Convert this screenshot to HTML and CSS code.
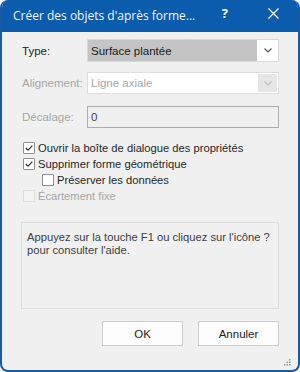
FILE: index.html
```html
<!DOCTYPE html>
<html lang="fr">
<head>
<meta charset="utf-8">
<link rel="stylesheet" href="styles.css">
</head>
<body>
<div class="window">
  <div class="titlebar">
    <span class="title">Créer des objets d'après forme...</span>
    <span class="help">?</span>
    <svg class="close" width="11" height="11" viewBox="0 0 11 11"><path d="M0.5 0.5 L10.5 10.5 M10.5 0.5 L0.5 10.5" stroke="#fff" stroke-width="1.2" fill="none"/></svg>
  </div>
  <div class="content">
    <div class="row">
      <span class="label">Type:</span>
      <div class="combo">
        <span class="combo-value selected">Surface plantée</span>
        <span class="combo-arrow"><svg width="8" height="5" viewBox="0 0 8 5"><path d="M0.5 0.5 L4 4 L7.5 0.5" stroke="#555" stroke-width="1.1" fill="none"/></svg></span>
      </div>
    </div>
    <div class="row row-2">
      <span class="label disabled">Alignement:</span>
      <div class="combo combo-disabled">
        <span class="combo-value">Ligne axiale</span>
        <span class="combo-arrow"><svg width="8" height="5" viewBox="0 0 8 5"><path d="M0.5 0.5 L4 4 L7.5 0.5" stroke="#bbb" stroke-width="1.1" fill="none"/></svg></span>
      </div>
    </div>
    <div class="row row-3">
      <span class="label disabled">Décalage:</span>
      <div class="textbox">0</div>
    </div>
    <div class="checks">
      <div class="check"><span class="box"><svg width="10" height="10" viewBox="0 0 10 10"><path d="M1.8 5 L4 7.2 L8.4 2.6" stroke="#333" stroke-width="1.2" fill="none"/></svg></span>Ouvrir la boîte de dialogue des propriétés</div>
      <div class="check"><span class="box"><svg width="10" height="10" viewBox="0 0 10 10"><path d="M1.8 5 L4 7.2 L8.4 2.6" stroke="#333" stroke-width="1.2" fill="none"/></svg></span>Supprimer forme géométrique</div>
      <div class="check indent"><span class="box"></span>Préserver les données</div>
      <div class="check disabled"><span class="box box-disabled"></span>Écartement fixe</div>
    </div>
    <div class="helpbox">Appuyez sur la touche F1 ou cliquez sur l'icône ?<br>pour consulter l'aide.</div>
    <div class="buttons">
      <button class="btn">OK</button>
      <button class="btn">Annuler</button>
    </div>
    <div class="grip">
      <svg width="7" height="7" viewBox="0 0 7 7" fill="#999"><rect x="5" y="0" width="1.5" height="1.5"/><rect x="2.5" y="2.5" width="1.5" height="1.5"/><rect x="5" y="2.5" width="1.5" height="1.5"/><rect x="0" y="5" width="1.5" height="1.5"/><rect x="2.5" y="5" width="1.5" height="1.5"/><rect x="5" y="5" width="1.5" height="1.5"/></svg>
    </div>
  </div>
</div>
</body>
</html>
```
FILE: styles.css
```css
html, body {
  margin: 0;
  padding: 0;
  background: #ffffff;
}
body {
  font-family: "Liberation Sans", Arial, sans-serif;
  font-size: 11.5px;
  color: #222;
}
.window {
  width: 300px;
  height: 372px;
  box-sizing: border-box;
  border: 2px solid #1a5aa4;
  border-top: none;
  border-radius: 8px;
  overflow: hidden;
  background: #f0f0f0;
  display: flex;
  flex-direction: column;
}
.titlebar {
  height: 32px;
  flex: none;
  background: #0b5cad;
  color: #f2f6fb;
  display: flex;
  align-items: center;
  padding-left: 11px;
  box-sizing: border-box;
}
.title {
  font-family: "Open Sans", "Liberation Sans", sans-serif;
  font-size: 12px;
  flex: 1;
  margin-top: -2px;
}
.help {
  font-family: "Open Sans", sans-serif;
  font-weight: bold;
  font-size: 13px;
  color: #fff;
  margin-right: 40px;
  margin-top: -6px;
}
.close {
  margin-right: 19px;
  margin-top: -5px;
}
.content {
  flex: 1;
  padding: 7px 19px 0 19px;
  display: flex;
  flex-direction: column;
  position: relative;
}
.row {
  display: flex;
  align-items: center;
  height: 23px;
}
.row-2 { margin-top: 10px; height: 22px; }
.row-3 { margin-top: 12px; height: 22px; }
.label {
  width: 65px;
  flex: none;
  padding-left: 1px;
  white-space: nowrap;
}
.disabled { color: #a6a6a6; }
.combo {
  flex: 1;
  height: 100%;
  box-sizing: border-box;
  border: 1px solid #d9d9d9;
  background: #fff;
  display: flex;
}
.combo-value {
  flex: 1;
  display: flex;
  align-items: center;
  padding-left: 3px;
}
.combo-value.selected {
  background: #c4c4c4;
  color: #1a1a1a;
}
.combo-arrow {
  width: 21px;
  display: flex;
  align-items: center;
  justify-content: center;
}
.combo-disabled {
  border-color: #dedede;
}
.combo-disabled .combo-value { color: #a6a6a6; }
.combo-disabled .combo-arrow {
  background: #e6e6e6;
  margin: 1px;
  width: 19px;
}
.textbox {
  flex: 1;
  height: 100%;
  box-sizing: border-box;
  border: 1px solid #adadad;
  background: #f0f0f0;
  display: flex;
  align-items: center;
  padding-left: 3px;
  color: #444;
}
.checks {
  margin-top: 12px;
  display: flex;
  flex-direction: column;
}
.check {
  height: 16px;
  display: flex;
  align-items: center;
  color: #262626;
  font-size: 11.2px;
  white-space: nowrap;
}
.check.disabled { color: #a6a6a6; }
.indent { padding-left: 19px; }
.box {
  width: 12px;
  height: 12px;
  box-sizing: border-box;
  border: 1px solid #8f8f8f;
  background: #fff;
  margin-left: 2px;
  margin-right: 3px;
  display: flex;
  align-items: center;
  justify-content: center;
  border-radius: 1px;
}
.box-disabled {
  border-color: #dcdcdc;
  background: #f3f3f3;
}
.helpbox {
  margin-top: 18px;
  height: 87px;
  box-sizing: border-box;
  border: 1px solid #dcdcdc;
  padding: 8px 2px 8px 5px;
  line-height: 13px;
  color: #404040;
  font-size: 11.2px;
  white-space: nowrap;
  overflow: hidden;
}
.buttons {
  margin-top: 12px;
  display: flex;
  justify-content: flex-end;
  gap: 15px;
}
.btn {
  width: 81px;
  height: 25px;
  box-sizing: border-box;
  border: 1px solid #cccccc;
  background: #fdfdfd;
  font-family: "Liberation Sans", Arial, sans-serif;
  font-size: 11.5px;
  color: #222;
  padding: 0;
}
.grip {
  position: absolute;
  right: 7px;
  bottom: 4px;
  line-height: 0;
}
```
